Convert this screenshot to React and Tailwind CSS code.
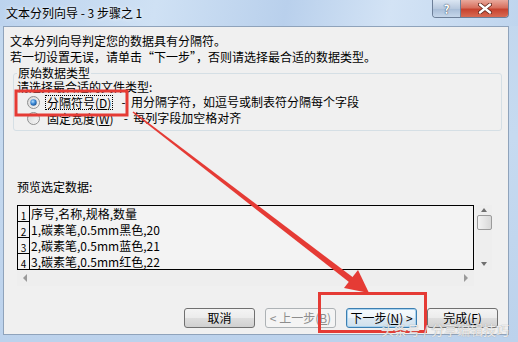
import React from 'react'

const cjk = "font-['Noto_Sans_CJK_SC','Microsoft_YaHei',sans-serif]"

function Radio({ id, checked }) {
  return (
    <svg width="13" height="13" viewBox="0 0 13 13" className="shrink-0">
      <defs>
        <linearGradient id={`rg-${id}`} x1="0" y1="0" x2="1" y2="1">
          <stop offset="0" stopColor="#cfcfcf" />
          <stop offset="1" stopColor="#ffffff" />
        </linearGradient>
        <radialGradient id={`rd-${id}`} cx="0.4" cy="0.35" r="0.7">
          <stop offset="0" stopColor="#b8e0fb" />
          <stop offset="0.5" stopColor="#3c8ad8" />
          <stop offset="1" stopColor="#1b4f8c" />
        </radialGradient>
      </defs>
      <circle cx="6.5" cy="6.5" r="6" fill={`url(#rg-${id})`} stroke="#8e8f8f" />
      <circle cx="6.5" cy="6.5" r="4.2" fill="none" stroke="#e6e6e6" strokeWidth="0.8" />
      {checked && <circle cx="6.5" cy="6.5" r="3.2" fill={`url(#rd-${id})`} />}
    </svg>
  )
}

function Btn({ children, kind = 'normal' }) {
  const styles = {
    normal:
      'border-[#707070] bg-[linear-gradient(to_bottom,#f4f4f4_0%,#ececec_48%,#dedede_52%,#d0d0d0_100%)] text-black',
    focus:
      'border-[#3c7fb1] bg-[linear-gradient(to_bottom,#f7fbfe_0%,#edf4f9_48%,#dde9f2_52%,#cfe0ec_100%)] text-black shadow-[inset_0_0_0_1px_#a9d3f0]',
    disabled: 'border-[#adb2b5] bg-[#f4f4f4] text-[#8d8d8d]',
  }
  return (
    <div
      className={`w-[71px] h-[20px] rounded-[3px] border flex items-center justify-center text-[12px] leading-none ${styles[kind]}`}
    >
      {children}
    </div>
  )
}

function Arrow({ dir, color = '#7a7a7a' }) {
  const pts = {
    up: '1,5 4,1 7,5',
    down: '1,1 4,5 7,1',
    left: '5,0 1,4 5,8',
    right: '1,0 5,4 1,8',
  }
  const vertical = dir === 'up' || dir === 'down'
  return (
    <svg width={vertical ? 8 : 6} height={vertical ? 6 : 8}>
      <polygon points={pts[dir]} fill={color} />
    </svg>
  )
}

const rows = [
  '序号,名称,规格,数量',
  '1,碳素笔,0.5mm黑色,20',
  '2,碳素笔,0.5mm蓝色,21',
  '3,碳素笔,0.5mm红色,22',
]

export default function App() {
  return (
    <div
      className={`relative w-[518px] h-[342px] overflow-hidden flex flex-col ${cjk} bg-[linear-gradient(to_bottom,#c2d7ee,#c6daf0_40%,#bcd2ec)]`}
    >
      {/* title bar */}
      <div className="h-[26px] flex items-start justify-between pl-[6px] pr-[9px] bg-[linear-gradient(100deg,#bcd3ee_0%,#cfe1f4_30%,#b9d0ec_55%,#d3e3f5_75%,#bfd5ee_100%)]">
        <span className="mt-[5px] text-[12px] leading-[16px] text-black [text-shadow:0_0_4px_#ffffff]">
          文本分列向导 - 3 步骤之 1
        </span>
        <div className="flex h-[18px] border border-t-0 border-[#6d7f98] rounded-b-[4px] overflow-hidden">
          <div className="w-[28px] flex items-center justify-center border-r border-[#6d7f98] bg-[linear-gradient(to_bottom,#dbe6f3,#b8c9de_50%,#a7bcd6_51%,#c5d6ea)]">
            <span className="text-[12px] leading-none font-bold text-white [text-shadow:0_0_1px_#34465e,0_0_1px_#34465e]">
              ?
            </span>
          </div>
          <div className="w-[47px] flex items-center justify-center bg-[linear-gradient(to_bottom,#e9a99c,#d7705e_45%,#c7432f_55%,#d86b53)]">
            <svg width="14" height="11" viewBox="0 0 14 11">
              <path d="M2 1.5 L12 9.5 M12 1.5 L2 9.5" stroke="#5e2419" strokeWidth="4" strokeLinecap="round" />
              <path d="M2 1.5 L12 9.5 M12 1.5 L2 9.5" stroke="#ffffff" strokeWidth="2.4" strokeLinecap="round" />
            </svg>
          </div>
        </div>
      </div>

      {/* dialog body */}
      <div className="ml-[3px] mr-[9px] mb-[7px] flex-1 border border-[#8fa3bb] bg-[#f0f0f0] flex flex-col text-[12px] text-black">
        <div className="pl-[6px] pt-[6px] leading-[16px]">
          <p>文本分列向导判定您的数据具有分隔符。</p>
          <p>若一切设置无误，请单击“下一步”，否则请选择最合适的数据类型。</p>
        </div>

        <fieldset className="ml-[9px] mr-[6px] mt-[1px] border border-[#d5dfe5] rounded-[3px] pl-[3px] pb-[4px]">
          <legend className="px-[1px] leading-[14px]">原始数据类型</legend>
          <p className="leading-[14px]">请选择最合适的文件类型:</p>
          <div className="flex items-center h-[16px] pl-[10px]">
            <Radio id="a" checked />
            <span className="ml-[5px] px-[1px] border border-dotted border-black leading-[13px]">
              分隔符号(<u>D</u>)
            </span>
            <span className="ml-[8px]">-&nbsp;&nbsp;用分隔字符，如逗号或制表符分隔每个字段</span>
          </div>
          <div className="flex items-center h-[16px] pl-[10px]">
            <Radio id="b" />
            <span className="ml-[5px] px-[1px] border border-transparent leading-[13px]">
              固定宽度(<u>W</u>)
            </span>
            <span className="ml-[8px]">-&nbsp;&nbsp;每列字段加空格对齐</span>
          </div>
        </fieldset>

        <p className="ml-[13px] mt-[49px] leading-[14px]">预览选定数据:</p>

        <div className="ml-[13px] mt-[11px] flex items-start">
          <div className="w-[457px] flex flex-col">
            <div className="h-[65px] border border-black bg-[#f3f3f3] overflow-hidden">
              {rows.map((r, i) => (
                <div key={i} className="flex h-[16px]">
                  <div className="w-[12px] shrink-0 border-r border-b border-black flex items-end justify-center text-[10px] leading-[11px]">
                    {i + 1}
                  </div>
                  <div className="pl-[1px] leading-[16px] whitespace-nowrap">{r}</div>
                </div>
              ))}
            </div>
            <div className="h-[16px] flex items-center justify-between px-[5px] bg-[#eeeeee]">
              <Arrow dir="left" color="#9a9a9a" />
              <Arrow dir="right" color="#9a9a9a" />
            </div>
          </div>
          <div className="ml-[2px] w-[16px] h-[65px] flex flex-col items-center bg-[#eeeeee]">
            <div className="h-[10px] flex items-center">
              <Arrow dir="up" color="#6f6f6f" />
            </div>
            <div className="w-[15px] h-[15px] rounded-[2px] border border-[#9b9b9b] bg-[linear-gradient(to_right,#f3f3f3,#e6e6e6_50%,#d8d8d8)]" />
            <div className="flex-1" />
            <div className="h-[12px] flex items-center">
              <Arrow dir="down" color="#6f6f6f" />
            </div>
          </div>
        </div>

        <div className="mt-[22px] pr-[10px] flex justify-end gap-[10px]">
          <Btn>取消</Btn>
          <Btn kind="disabled">
            &lt; 上一步(<u>B</u>)
          </Btn>
          <Btn kind="focus">
            下一步(<u>N</u>) &gt;
          </Btn>
          <Btn>
            完成(<u>F</u>)
          </Btn>
        </div>
      </div>

      {/* red annotations */}
      <svg className="absolute inset-0 pointer-events-none" width="518" height="342">
        <rect x="16" y="91" width="111" height="24" fill="none" stroke="#e53b35" strokeWidth="3" />
        <rect x="319.5" y="293.5" width="106" height="38" fill="none" stroke="#e53b35" strokeWidth="3" />
        <polygon
          points="132.5,112.6 133.5,111.4 353.2,277.6 349.6,282.4"
          fill="#e53b35"
        />
        <polygon points="369,293 344,288 358,270" fill="#e53b35" />
      </svg>

      {/* watermark */}
      <span className="absolute left-[381px] top-[322px] text-[13px] leading-[16px] text-white/80 [text-shadow:0_0_1px_#8a8a8a]">
        头条号 / 分享编辑技巧
      </span>
    </div>
  )
}
